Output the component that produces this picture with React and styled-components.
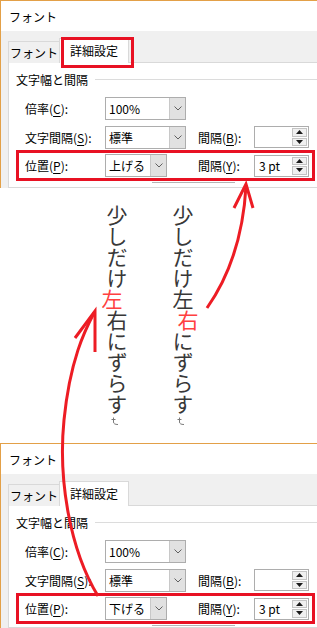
import React from "react";
import styled, { createGlobalStyle } from "styled-components";

const GlobalStyle = createGlobalStyle`
  * { box-sizing: border-box; }
  html, body { margin: 0; padding: 0; background: #ffffff; }
  body { font-family: "Noto Sans CJK JP", "Noto Sans", sans-serif; }
`;

const Page = styled.div`
  position: relative;
  width: 317px;
  height: 628px;
  overflow: hidden;
  background: #ffffff;
`;

const DialogCrop = styled.div`
  height: ${(p) => p.$height}px;
  overflow: hidden;
  display: flex;
  flex-direction: column;
  border-top: 1px solid #e3a047;
  border-left: 1px solid #e3a047;
`;

const TitleBar = styled.div`
  flex: 0 0 30px;
  display: flex;
  align-items: center;
  padding-left: 8px;
  background: #ffffff;
  font-size: 12px;
  color: #000000;
`;

const Body = styled.div`
  flex: 1;
  display: flex;
  flex-direction: column;
  background: #f0f0f0;
  padding: 7px 0 0 7px;
`;

const TabStrip = styled.div`
  display: flex;
  align-items: flex-end;
  height: 25px;
  margin-bottom: -1px;
`;

const Tab = styled.div`
  position: relative;
  display: flex;
  align-items: center;
  justify-content: center;
  width: ${(p) => (p.$active ? 70 : 52)}px;
  height: ${(p) => (p.$active ? 25 : 22)}px;
  margin-left: ${(p) => (p.$active ? -1 : 0)}px;
  padding-bottom: ${(p) => (p.$active ? 1 : 0)}px;
  background: ${(p) => (p.$active ? "#ffffff" : "#f0f0f0")};
  border: 1px solid #d9d9d9;
  border-bottom: none;
  z-index: ${(p) => (p.$active ? 1 : 0)};
  font-size: 12px;
  color: #000000;
`;

const TabMark = styled.div`
  position: absolute;
  left: 1px;
  top: -2px;
  width: 73px;
  height: 31px;
  border: 3px solid #e81123;
`;

const Panel = styled.div`
  flex: 1;
  background: #ffffff;
  border: 1px solid #d9d9d9;
  border-right: none;
  padding: 7px 0 0 0;
`;

const GroupHeader = styled.div`
  display: flex;
  align-items: center;
  gap: 7px;
  height: 18px;
  padding-left: 7px;
  font-size: 12px;
  color: #000000;
`;

const GroupLine = styled.div`
  flex: 1;
  height: 1px;
  background: #dcdcdc;
`;

const Rows = styled.div`
  display: flex;
  flex-direction: column;
  gap: 5px;
  margin-top: 8px;
`;

const Row = styled.div`
  display: flex;
  align-items: center;
  height: ${(p) => (p.$marked ? 31 : 24)}px;
  padding-left: ${(p) => (p.$marked ? 6 : 16)}px;
  margin: ${(p) => (p.$marked ? "-4px 2px 0 7px" : "0")};
  border: ${(p) => (p.$marked ? "3px solid #e81123" : "none")};
`;

const LeftCell = styled.div`
  display: flex;
  align-items: center;
  width: 173px;
`;

const Label = styled.div`
  width: ${(p) => p.$width}px;
  font-size: 12px;
  color: #000000;
  white-space: nowrap;
`;

const Key = styled.span`
  text-decoration: underline;
  text-underline-offset: 2px;
`;

const Combo = styled.div`
  display: flex;
  width: ${(p) => p.$width}px;
  height: 23px;
  border: 1px solid #adadad;
  background: #ffffff;
`;

const ComboText = styled.div`
  flex: 1;
  display: flex;
  align-items: center;
  padding-left: 3px;
  font-size: 12px;
  color: #000000;
`;

const ComboButton = styled.div`
  width: 16px;
  display: flex;
  align-items: center;
  justify-content: center;
  background: #e1e1e1;
  border-left: 1px solid #c8c8c8;
`;

const Spin = styled.div`
  display: flex;
  width: 55px;
  height: 22px;
  border: 1px solid #adadad;
  background: #ffffff;
`;

const SpinText = styled.div`
  flex: 1;
  display: flex;
  align-items: center;
  padding-left: 4px;
  font-size: 12px;
  color: #000000;
`;

const SpinButtons = styled.div`
  width: 16px;
  display: flex;
  flex-direction: column;
  gap: 1px;
  padding: 1px 1px 1px 0;
`;

const SpinButton = styled.div`
  flex: 1;
  display: flex;
  align-items: center;
  justify-content: center;
  background: #f0f0f0;
  border: 1px solid #c4c4c4;
`;

const CutEdge = styled.div`
  width: 83px;
  height: 1px;
  margin: 1px 0 0 143px;
  background: #b4b4b4;
`;

const Middle = styled.div`
  height: 255px;
  display: flex;
  gap: 45px;
  padding: 17px 0 0 106px;
`;

const Column = styled.div`
  display: flex;
  flex-direction: column;
  align-items: center;
  width: 21px;
`;

const VText = styled.div`
  writing-mode: vertical-rl;
  font-family: "Noto Sans CJK JP", sans-serif;
  font-size: 21px;
  line-height: 21px;
  color: #383838;
`;

const Shifted = styled.span`
  display: inline-block;
  color: #ff4040;
  transform: translateX(${(p) => p.$x}px);
`;

const ParaMark = styled.svg`
  margin: 2px 4px 0 0;
`;

const Overlay = styled.svg`
  position: absolute;
  left: 0;
  top: 0;
  pointer-events: none;
  z-index: 5;
`;

const Chevron = () => (
  <svg width="8" height="5" viewBox="0 0 8 5">
    <path d="M0.5 0.5 L4 4 L7.5 0.5" stroke="#606060" fill="none" />
  </svg>
);

const Triangle = ({ down }) => (
  <svg width="7" height="4" viewBox="0 0 7 4">
    <path d={down ? "M0 0 H7 L3.5 4 Z" : "M3.5 0 L7 4 H0 Z"} fill="#1a1a1a" />
  </svg>
);

const ComboBox = ({ width, value }) => (
  <Combo $width={width}>
    <ComboText>{value}</ComboText>
    <ComboButton>
      <Chevron />
    </ComboButton>
  </Combo>
);

const SpinBox = ({ value }) => (
  <Spin>
    <SpinText>{value}</SpinText>
    <SpinButtons>
      <SpinButton>
        <Triangle />
      </SpinButton>
      <SpinButton>
        <Triangle down />
      </SpinButton>
    </SpinButtons>
  </Spin>
);

const FontDialog = ({ height, position, markTab }) => (
  <DialogCrop $height={height}>
    <TitleBar>フォント</TitleBar>
    <Body>
      <TabStrip>
        <Tab>フォント</Tab>
        <Tab $active>
          詳細設定
          {markTab && <TabMark />}
        </Tab>
      </TabStrip>
      <Panel>
        <GroupHeader>
          文字幅と間隔
          <GroupLine />
        </GroupHeader>
        <Rows>
          <Row>
            <LeftCell>
              <Label $width={80}>
                倍率(<Key>C</Key>):
              </Label>
              <ComboBox width={81} value="100%" />
            </LeftCell>
          </Row>
          <Row>
            <LeftCell>
              <Label $width={80}>
                文字間隔(<Key>S</Key>):
              </Label>
              <ComboBox width={81} value="標準" />
            </LeftCell>
            <Label $width={56}>
              間隔(<Key>B</Key>):
            </Label>
            <SpinBox value="" />
          </Row>
          <Row $marked>
            <LeftCell>
              <Label $width={80}>
                位置(<Key>P</Key>):
              </Label>
              <ComboBox width={62} value={position} />
            </LeftCell>
            <Label $width={56}>
              間隔(<Key>Y</Key>):
            </Label>
            <SpinBox value="3 pt" />
          </Row>
        </Rows>
        <CutEdge />
      </Panel>
    </Body>
  </DialogCrop>
);

const Mark = () => (
  <ParaMark width="8" height="8" viewBox="0 0 8 8">
    <path d="M0.5 2.5 H4.5 M2.5 0.5 V5 Q2.5 7.5 7 7.5" stroke="#7a7a7a" strokeWidth="1" fill="none" />
  </ParaMark>
);

const App = () => (
  <Page>
    <GlobalStyle />
    <FontDialog height={188} position="上げる" markTab />
    <Middle>
      <Column>
        <VText>
          少しだけ<Shifted $x={-5}>左</Shifted>右にずらす
        </VText>
        <Mark />
      </Column>
      <Column>
        <VText>
          少しだけ左<Shifted $x={5}>右</Shifted>にずらす
        </VText>
        <Mark />
      </Column>
    </Middle>
    <FontDialog height={185} position="下げる" />
    <Overlay width="317" height="628" viewBox="0 0 317 628">
      <g stroke="#ed1c24" strokeWidth="3" fill="none" strokeLinecap="butt">
        <path d="M207 308 Q242 258 246 186" />
        <path d="M234 208 L246 184 L253 208" />
        <path d="M98 596 C70 550 58 480 64 420 S85 330 94 313" />
        <path d="M75 338 L95 311 L95 352" />
      </g>
    </Overlay>
  </Page>
);

export default App;
